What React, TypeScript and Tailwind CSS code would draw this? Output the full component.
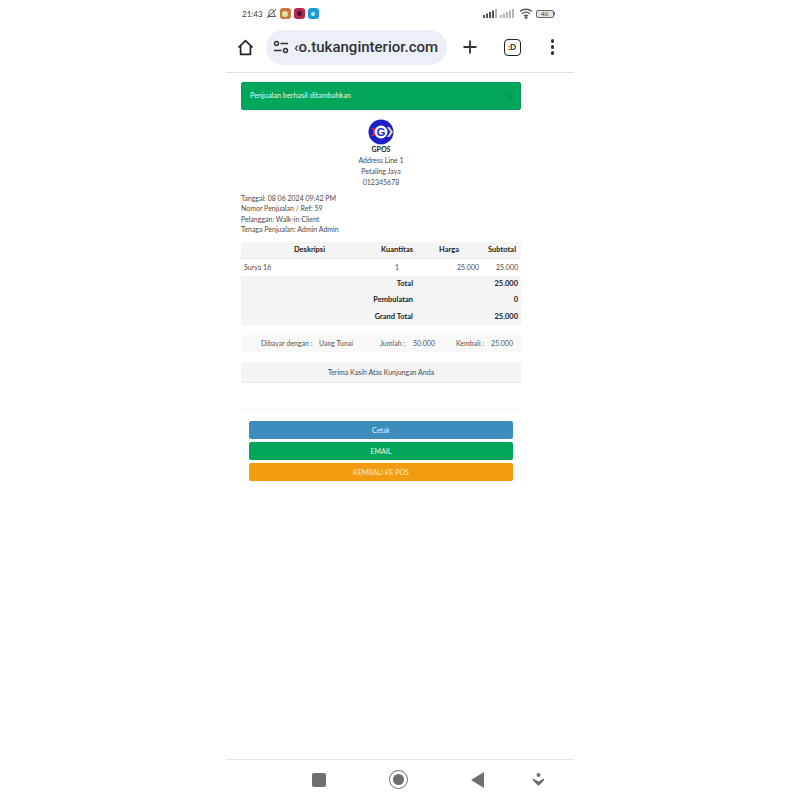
const Home = () => (
  <svg width="17" height="17" viewBox="0 0 18 18" fill="none" stroke="#222" strokeWidth="1.8" strokeLinejoin="round">
    <path d="M1.5 9 9 1.8 16.5 9M3.8 7.2V16.2H14.2V7.2" />
  </svg>
);

const SiteControls = () => (
  <svg width="16" height="14" viewBox="0 0 16 14" fill="none" stroke="#333" strokeWidth="1.4" className="shrink-0">
    <circle cx="3.5" cy="3.5" r="2" />
    <path d="M7.5 3.5H15M1 10.5H8.5" />
    <circle cx="12.5" cy="10.5" r="2" />
  </svg>
);

const Logo = () => (
  <svg width="26" height="26" viewBox="0 0 26 26">
    <circle cx="13" cy="13" r="12.5" fill="#1a22c4" />
    <path d="M3 9h3.5l3 4-3 4H3l3-4Z" fill="#c81e4a" />
    <circle cx="13" cy="13" r="6.5" fill="#ffffff" />
    <text x="13" y="17" textAnchor="middle" fontSize="11" fontWeight="900" fill="#1a22c4" fontFamily="Liberation Sans, sans-serif">G</text>
    <path d="M19 8h2.4l3.6 5-3.6 5H19l3.4-5Z" fill="#e8d9a0" />
  </svg>
);

const SignalBars = ({ dim }: { dim?: boolean }) => (
  <svg width="14" height="9" viewBox="0 0 14 9" fill={dim ? "#b5b5b5" : "#555"}>
    <rect x="0" y="6" width="2" height="3" />
    <rect x="3" y="4.5" width="2" height="4.5" />
    <rect x="6" y="3" width="2" height="6" />
    <rect x="9" y="1.5" width="2" height="7.5" />
    <rect x="12" y="0" width="2" height="9" fill="#b5b5b5" />
  </svg>
);

const App = () => {
  return (
    <div className="h-[800px] bg-white flex justify-center text-[#4a4a4a] font-['Lato','Liberation_Sans',sans-serif]">
      <div className="w-[348px] h-full flex flex-col">
        {/* status bar */}
        <div className="h-[26px] flex items-center justify-between pl-[16px] pr-[19px] pt-[1px]">
          <div className="flex items-center">
            <span className="text-[8px] text-[#333] mr-[3px]">21:43</span>
            <svg width="11" height="11" viewBox="0 0 11 11" fill="none" stroke="#555" strokeWidth="1" className="mr-[3px]">
              <path d="M2 8.5C3 7 3 5.5 3 4.5 3 3 4 1.5 5.5 1.5S8 3 8 4.5C8 5.5 8 7 9.5 8.5ZM1 10 10 1" />
            </svg>
            <span className="w-[11px] h-[11px] rounded-[3px] bg-[#c8773f] flex items-center justify-center mr-[3px]">
              <span className="w-[6px] h-[6px] rounded-full bg-[#e5e4a8]" />
            </span>
            <span className="w-[11px] h-[11px] rounded-[3px] bg-[#b8274f] flex items-center justify-center mr-[3px]">
              <span className="w-[5px] h-[5px] rounded-full bg-[#45103a]" />
            </span>
            <span className="w-[11px] h-[11px] rounded-[3px] bg-[#1c9ad6] flex items-center justify-center">
              <span className="w-[4px] h-[4px] rounded-full bg-[#bfe6f5]" />
            </span>
          </div>
          <div className="flex items-center">
            <SignalBars />
            <span className="w-[3px]" />
            <SignalBars dim />
            <svg width="14" height="11" viewBox="0 0 14 11" fill="none" stroke="#555" strokeWidth="1.4" className="ml-[5px] mr-[3px]">
              <path d="M1 3.5C4.5.5 9.5.5 13 3.5M3 5.8c2.4-2 5.6-2 8 0M5 8c1.2-1 2.8-1 4 0" />
              <circle cx="7" cy="9.6" r="0.7" fill="#555" />
            </svg>
            <span className="w-[18px] h-[8px] rounded-[2px] border border-[#666] bg-[#e4e4e4] text-[6px] leading-[6px] text-center text-[#333]">40</span>
            <span className="w-[1.5px] h-[3px] bg-[#666]" />
          </div>
        </div>

        {/* browser toolbar */}
        <div className="h-[47px] pb-[4px] flex items-center border-b border-[#dedede]">
          <div className="w-[40px] flex justify-center pr-[1px]">
            <Home />
          </div>
          <div className="w-[181px] h-[35px] rounded-full bg-[#eaeff8] flex items-center pl-[7px] overflow-hidden">
            <SiteControls />
            <span className="ml-[5px] text-[15px] font-medium text-[#333] whitespace-nowrap font-['Roboto',sans-serif]">
              ‹o.tukanginterior.com
            </span>
          </div>
          <div className="w-[46px] flex justify-center">
            <svg width="16" height="16" viewBox="0 0 16 16" stroke="#333" strokeWidth="1.8">
              <path d="M8 1.5V14.5M1.5 8H14.5" />
            </svg>
          </div>
          <div className="w-[38px] flex justify-center">
            <span className="w-[17px] h-[17px] rounded-[4px] border-[1.5px] border-[#222] text-[8px] font-bold leading-[14px] text-center text-[#222]">:D</span>
          </div>
          <div className="flex-1 flex flex-col items-center gap-[2.5px]">
            <span className="w-[3.5px] h-[3.5px] rounded-full bg-[#333]" />
            <span className="w-[3.5px] h-[3.5px] rounded-full bg-[#333]" />
            <span className="w-[3.5px] h-[3.5px] rounded-full bg-[#333]" />
          </div>
        </div>

        {/* page */}
        <div className="flex-1 pl-[15px] pt-[9px]">
          <div className="w-[280px]">
            <div className="h-[28px] rounded-[2px] bg-[#00a65a] border border-[#059a55] flex items-center justify-between px-[8px] pt-[1px] text-[7.3px] text-[#e6f7ee]">
              <span>Penjualan berhasil ditambahkan</span>
              <span className="text-[#0a7f49] text-[9px]">×</span>
            </div>

            {/* store info */}
            <div className="flex flex-col items-center mt-[9px] text-[7px] leading-[11px]">
              <Logo />
              <span className="font-bold text-[#222] leading-[9px]">GPOS</span>
              <span className="mt-[1px]">Address Line 1</span>
              <span>Petaling Jaya</span>
              <span>012345678</span>
            </div>

            <div className="mt-[5px] text-[7px] leading-[10.4px]">
              <p>Tanggal: 08 06 2024 09:42 PM</p>
              <p>Nomor Penjualan / Ref: 59</p>
              <p>Pelanggan: Walk-in Client</p>
              <p>Tenaga Penjualan: Admin Admin</p>
            </div>

            {/* items */}
            <table className="w-[280px] mt-[7px] text-[7px] table-fixed">
              <colgroup>
                <col className="w-[137px]" />
                <col className="w-[35px]" />
                <col className="w-[46px]" />
                <col className="w-[62px]" />
              </colgroup>
              <thead>
                <tr className="h-[17px] bg-[#f4f4f4] border-b border-[#e8e8e8] text-[#222] text-[7.5px]">
                  <th className="text-center font-bold">Deskripsi</th>
                  <th className="text-right font-bold">Kuantitas</th>
                  <th className="text-right font-bold">Harga</th>
                  <th className="text-right font-bold pr-[5px]">Subtotal</th>
                </tr>
              </thead>
              <tbody>
                <tr className="h-[17px]">
                  <td className="pl-[3px]">Surya 16</td>
                  <td className="text-right pr-[14px]">1</td>
                  <td className="text-right" colSpan={2}>
                    <span className="inline-block w-[61px]">25.000</span>
                    <span className="inline-block w-[42px] pr-[3px]">25.000</span>
                  </td>
                </tr>
                {[
                  ["Total", "25.000"],
                  ["Pembulatan", "0"],
                  ["Grand Total", "25.000"],
                ].map(([label, value]) => (
                  <tr key={label} className="h-[16.3px] bg-[#f4f4f4] text-[#222] font-bold text-[7.5px]">
                    <td colSpan={2} className="text-right">{label}</td>
                    <td colSpan={2} className="text-right pr-[3px]">{value}</td>
                  </tr>
                ))}
              </tbody>
            </table>

            {/* payment */}
            <div className="h-[17px] mt-[10px] bg-[#f8f8f8] flex items-center text-[7px] text-[#555]">
              <span className="ml-[20px] w-[52px] whitespace-nowrap">Dibayar dengan :</span>
              <span className="ml-[6px] w-[35px] whitespace-nowrap">Uang Tunai</span>
              <span className="ml-[26px] w-[31px] whitespace-nowrap">Jumlah :</span>
              <span className="ml-[2px] w-[21px]">50.000</span>
              <span className="ml-[22px] w-[30px] whitespace-nowrap">Kembali :</span>
              <span className="ml-[5px] w-[20px]">25.000</span>
            </div>

            <div className="h-[21px] mt-[10px] pt-[2px] bg-[#f4f4f4] border-b border-[#ececec] flex items-center justify-center text-[7px]">
              Terima Kasih Atas Kunjungan Anda
            </div>

            <div className="h-px bg-[#f6f6f6] mt-[26px]" />

            {/* actions */}
            <div className="mt-[11px] mx-[8px] flex flex-col gap-[3px] text-[7px]">
              <button className="h-[18px] pt-px rounded-[2px] bg-[#3c8dbc] text-[#e8f2f8]">Cetak</button>
              <button className="h-[18px] pt-px rounded-[2px] bg-[#00a65a] text-[#e6f7ee]">EMAIL</button>
              <button className="h-[18px] pt-px rounded-[2px] bg-[#f39c12] text-[#fde6c0]">KEMBALI KE POS</button>
            </div>
          </div>
        </div>

        {/* android nav */}
        <div className="h-[41px] border-t border-[#e6e6e6] flex items-center pl-[86px] pb-[1px]">
          <span className="w-[14px] h-[14px] rounded-[2px] bg-[#6f6f6f]" />
          <span className="w-[19px] h-[19px] rounded-full border-[1.5px] border-[#6f6f6f] flex items-center justify-center ml-[63px]">
            <span className="w-[11px] h-[11px] rounded-full bg-[#6f6f6f]" />
          </span>
          <svg width="13" height="16" viewBox="0 0 13 16" fill="#6f6f6f" className="ml-[63px]">
            <path d="M13 0V16L0 8Z" />
          </svg>
          <svg width="11" height="13" viewBox="0 0 11 13" fill="#6f6f6f" className="ml-[49px]">
            <circle cx="5.5" cy="2" r="2" />
            <path d="M0 5.5 5.5 8.5 11 5.5V7.5L5.5 13 0 7.5Z" />
          </svg>
        </div>
      </div>
    </div>
  );
};

export default App;
